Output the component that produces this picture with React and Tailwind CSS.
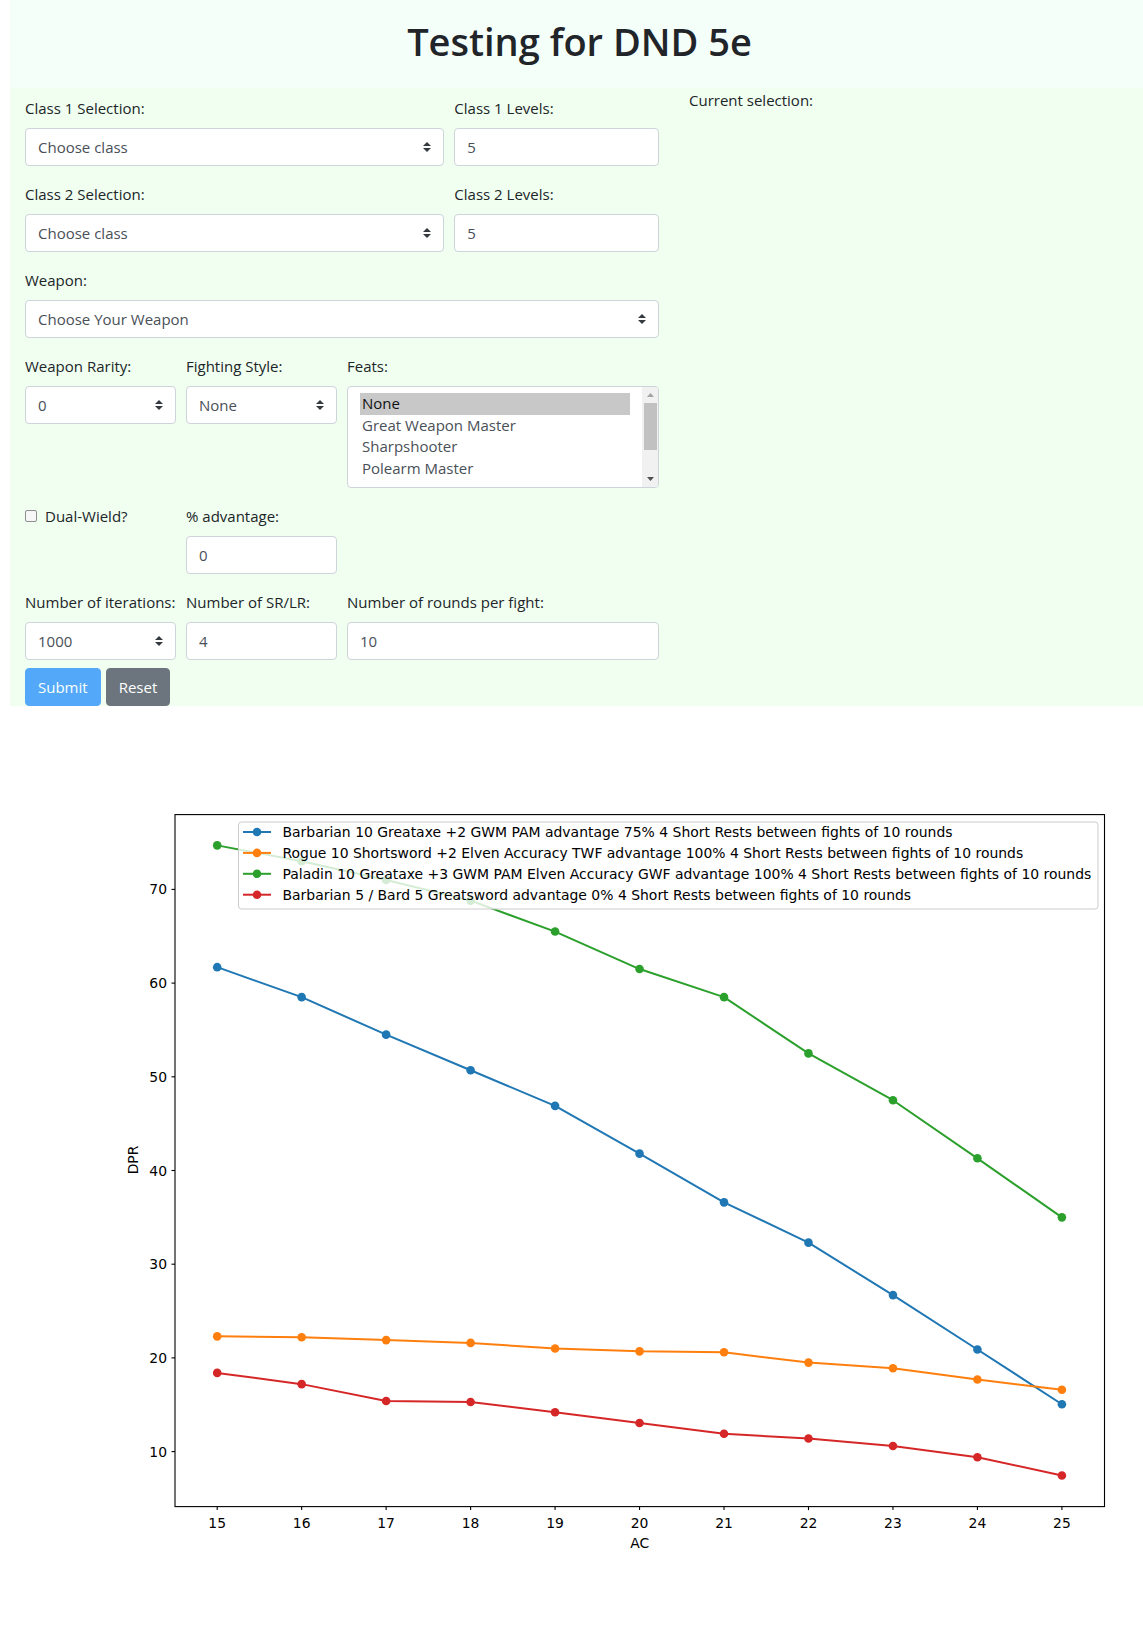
import React from 'react';

const AC = [15, 16, 17, 18, 19, 20, 21, 22, 23, 24, 25];

const SERIES = [
  {
    color: '#1f77b4',
    label: 'Barbarian 10 Greataxe +2 GWM PAM advantage 75% 4 Short Rests between fights of 10 rounds',
    data: [61.7, 58.5, 54.5, 50.7, 46.9, 41.8, 36.6, 32.3, 26.7, 20.9, 15.05],
  },
  {
    color: '#ff7f0e',
    label: 'Rogue 10 Shortsword +2 Elven Accuracy TWF advantage 100% 4 Short Rests between fights of 10 rounds',
    data: [22.3, 22.2, 21.9, 21.6, 21.0, 20.7, 20.6, 19.5, 18.9, 17.7, 16.6],
  },
  {
    color: '#2ca02c',
    label: 'Paladin 10 Greataxe +3 GWM PAM Elven Accuracy GWF advantage 100% 4 Short Rests between fights of 10 rounds',
    data: [74.7, 73.0, 71.0, 68.8, 65.5, 61.5, 58.5, 52.5, 47.5, 41.3, 35.0],
  },
  {
    color: '#d62728',
    label: 'Barbarian 5 / Bard 5 Greatsword advantage 0% 4 Short Rests between fights of 10 rounds',
    data: [18.4, 17.2, 15.4, 15.3, 14.2, 13.05, 11.9, 11.4, 10.6, 9.4, 7.45],
  },
];

const FEATS = ['None', 'Great Weapon Master', 'Sharpshooter', 'Polearm Master', 'Crossbow Expert'];

// chart coordinates are page coordinates (viewBox starts at y=706)
const px = (x) => 217.2 + (x - 15) * 84.47;
const py = (v) => 889.4 - (v - 70) * 9.37;

function Arrows() {
  return (
    <svg width="8" height="10" viewBox="0 0 4 5" className="shrink-0">
      <path d="M2 0L0 2h4zm0 5L0 3h4z" fill="#343a40" />
    </svg>
  );
}

function Label({ children }) {
  return <label className="block leading-6 mb-2 whitespace-nowrap">{children}</label>;
}

function SelectBox({ value }) {
  return (
    <div className="h-[38px] flex items-center justify-between pl-3 pr-3 bg-white border border-[#ced4da] rounded text-[#495057]">
      <span className="whitespace-nowrap">{value}</span>
      <Arrows />
    </div>
  );
}

function TextBox({ value }) {
  return (
    <div className="h-[38px] flex items-center px-3 bg-white border border-[#ced4da] rounded text-[#495057]">
      {value}
    </div>
  );
}

function FeatsList() {
  return (
    <div className="h-[102px] flex items-start bg-white border border-[#ced4da] rounded overflow-hidden">
      <div className="flex-1 h-[93px] pt-[6px] pl-3 pr-3 overflow-hidden">
        {FEATS.map((f, i) => (
          <div
            key={f}
            className={
              'h-[21.7px] leading-[21.7px] px-[2px] whitespace-nowrap ' +
              (i === 0 ? 'bg-[#c8c8c8] text-[#111]' : 'text-[#495057]')
            }
          >
            {f}
          </div>
        ))}
      </div>
      <div className="w-[16px] h-full bg-[#f1f1f1] flex flex-col items-center">
        <div className="h-[16px] flex items-center justify-center">
          <svg width="7" height="4" viewBox="0 0 7 4"><path d="M3.5 0L7 4H0z" fill="#a3a3a3" /></svg>
        </div>
        <div className="w-[13px] h-[47px] bg-[#c1c1c1]" />
        <div className="flex-1" />
        <div className="h-[16px] flex items-center justify-center">
          <svg width="7" height="4" viewBox="0 0 7 4"><path d="M0 0h7L3.5 4z" fill="#505050" /></svg>
        </div>
      </div>
    </div>
  );
}

function Chart() {
  const yTicks = [10, 20, 30, 40, 50, 60, 70];
  const tf = 'DejaVu Sans, Liberation Sans, sans-serif';
  return (
    <svg width="1143" height="923" viewBox="0 706 1143 923" className="block">
      {SERIES.map((s) => (
        <g key={s.color}>
          <polyline
            points={s.data.map((v, i) => `${px(AC[i])},${py(v)}`).join(' ')}
            fill="none"
            stroke={s.color}
            strokeWidth="2"
            strokeLinejoin="round"
          />
          {s.data.map((v, i) => (
            <circle key={i} cx={px(AC[i])} cy={py(v)} r="4.3" fill={s.color} />
          ))}
        </g>
      ))}
      <rect x="175" y="814.6" width="929.5" height="692" fill="none" stroke="#000" strokeWidth="1.1" />
      {yTicks.map((t) => (
        <g key={t}>
          <line x1="171.5" x2="175" y1={py(t)} y2={py(t)} stroke="#000" strokeWidth="1.1" />
          <text x="167" y={py(t)} fontSize="13.9" fontFamily={tf} textAnchor="end" dominantBaseline="central" fill="#000">
            {t}
          </text>
        </g>
      ))}
      {AC.map((x) => (
        <g key={x}>
          <line x1={px(x)} x2={px(x)} y1="1506.6" y2="1510.1" stroke="#000" strokeWidth="1.1" />
          <text x={px(x)} y="1528" fontSize="13.9" fontFamily={tf} textAnchor="middle" fill="#000">
            {x}
          </text>
        </g>
      ))}
      <text x="639.7" y="1548" fontSize="13.9" fontFamily={tf} textAnchor="middle" fill="#000">AC</text>
      <text
        x="0"
        y="0"
        fontSize="13.9"
        fontFamily={tf}
        textAnchor="middle"
        fill="#000"
        transform="translate(138 1160) rotate(-90)"
      >
        DPR
      </text>
      <rect x="238.5" y="822" width="859.5" height="87" rx="3" fill="#fff" fillOpacity="0.8" stroke="#cccccc" strokeWidth="1" />
      {SERIES.map((s, i) => {
        const y = 832 + i * 20.9;
        return (
          <g key={s.label}>
            <line x1="243" x2="271" y1={y} y2={y} stroke={s.color} strokeWidth="2" />
            <circle cx="257" cy={y} r="4.3" fill={s.color} />
            <text x="282.5" y={y} fontSize="13.95" fontFamily={tf} dominantBaseline="central" fill="#000">
              {s.label}
            </text>
          </g>
        );
      })}
    </svg>
  );
}

export default function App() {
  return (
    <div className="min-h-[1629px] bg-white text-[#212529] text-[15px] font-['Open_Sans',sans-serif] overflow-hidden">
      <header className="ml-[10px] h-[88px] bg-[#f5fffa] flex items-center justify-center pl-[6px] pb-1">
        <h1 className="text-[38px] leading-[1.2] font-semibold">Testing for DND 5e</h1>
      </header>

      <section className="ml-[10px] h-[618px] bg-[#f0fff0] flex">
        <form className="w-[664px] px-[15px] pt-2 shrink-0" onSubmit={(e) => e.preventDefault()}>
          <div className="grid grid-cols-12 gap-x-[10px] mb-4">
            <div className="col-span-8">
              <Label>Class 1 Selection:</Label>
              <SelectBox value="Choose class" />
            </div>
            <div className="col-span-4">
              <Label>Class 1 Levels:</Label>
              <TextBox value="5" />
            </div>
          </div>

          <div className="grid grid-cols-12 gap-x-[10px] mb-4">
            <div className="col-span-8">
              <Label>Class 2 Selection:</Label>
              <SelectBox value="Choose class" />
            </div>
            <div className="col-span-4">
              <Label>Class 2 Levels:</Label>
              <TextBox value="5" />
            </div>
          </div>

          <div className="mb-4">
            <Label>Weapon:</Label>
            <SelectBox value="Choose Your Weapon" />
          </div>

          <div className="grid grid-cols-12 gap-x-[10px] mb-4">
            <div className="col-span-3">
              <Label>Weapon Rarity:</Label>
              <SelectBox value="0" />
            </div>
            <div className="col-span-3">
              <Label>Fighting Style:</Label>
              <SelectBox value="None" />
            </div>
            <div className="col-span-6">
              <Label>Feats:</Label>
              <FeatsList />
            </div>
          </div>

          <div className="grid grid-cols-12 gap-x-[10px] mb-4">
            <div className="col-span-3 flex items-center h-6 gap-2">
              <span className="w-[12px] h-[12px] border border-[#8f8f8f] rounded-[2px] bg-[#f7f7f7] shrink-0" />
              <span className="whitespace-nowrap">Dual-Wield?</span>
            </div>
            <div className="col-span-3">
              <Label>% advantage:</Label>
              <TextBox value="0" />
            </div>
          </div>

          <div className="grid grid-cols-12 gap-x-[10px] mb-2">
            <div className="col-span-3">
              <Label>Number of iterations:</Label>
              <SelectBox value="1000" />
            </div>
            <div className="col-span-3">
              <Label>Number of SR/LR:</Label>
              <TextBox value="4" />
            </div>
            <div className="col-span-6">
              <Label>Number of rounds per fight:</Label>
              <TextBox value="10" />
            </div>
          </div>

          <div className="flex gap-[5px]">
            <button type="submit" className="h-[38px] px-3 rounded border border-[#007bff] bg-[#007bff] opacity-65 text-white">
              Submit
            </button>
            <button type="button" className="h-[38px] px-3 rounded border border-[#6c757d] bg-[#6c757d] text-white">
              Reset
            </button>
          </div>
        </form>
        <div className="pl-[15px] leading-6">Current selection:</div>
      </section>

      <Chart />
    </div>
  );
}
